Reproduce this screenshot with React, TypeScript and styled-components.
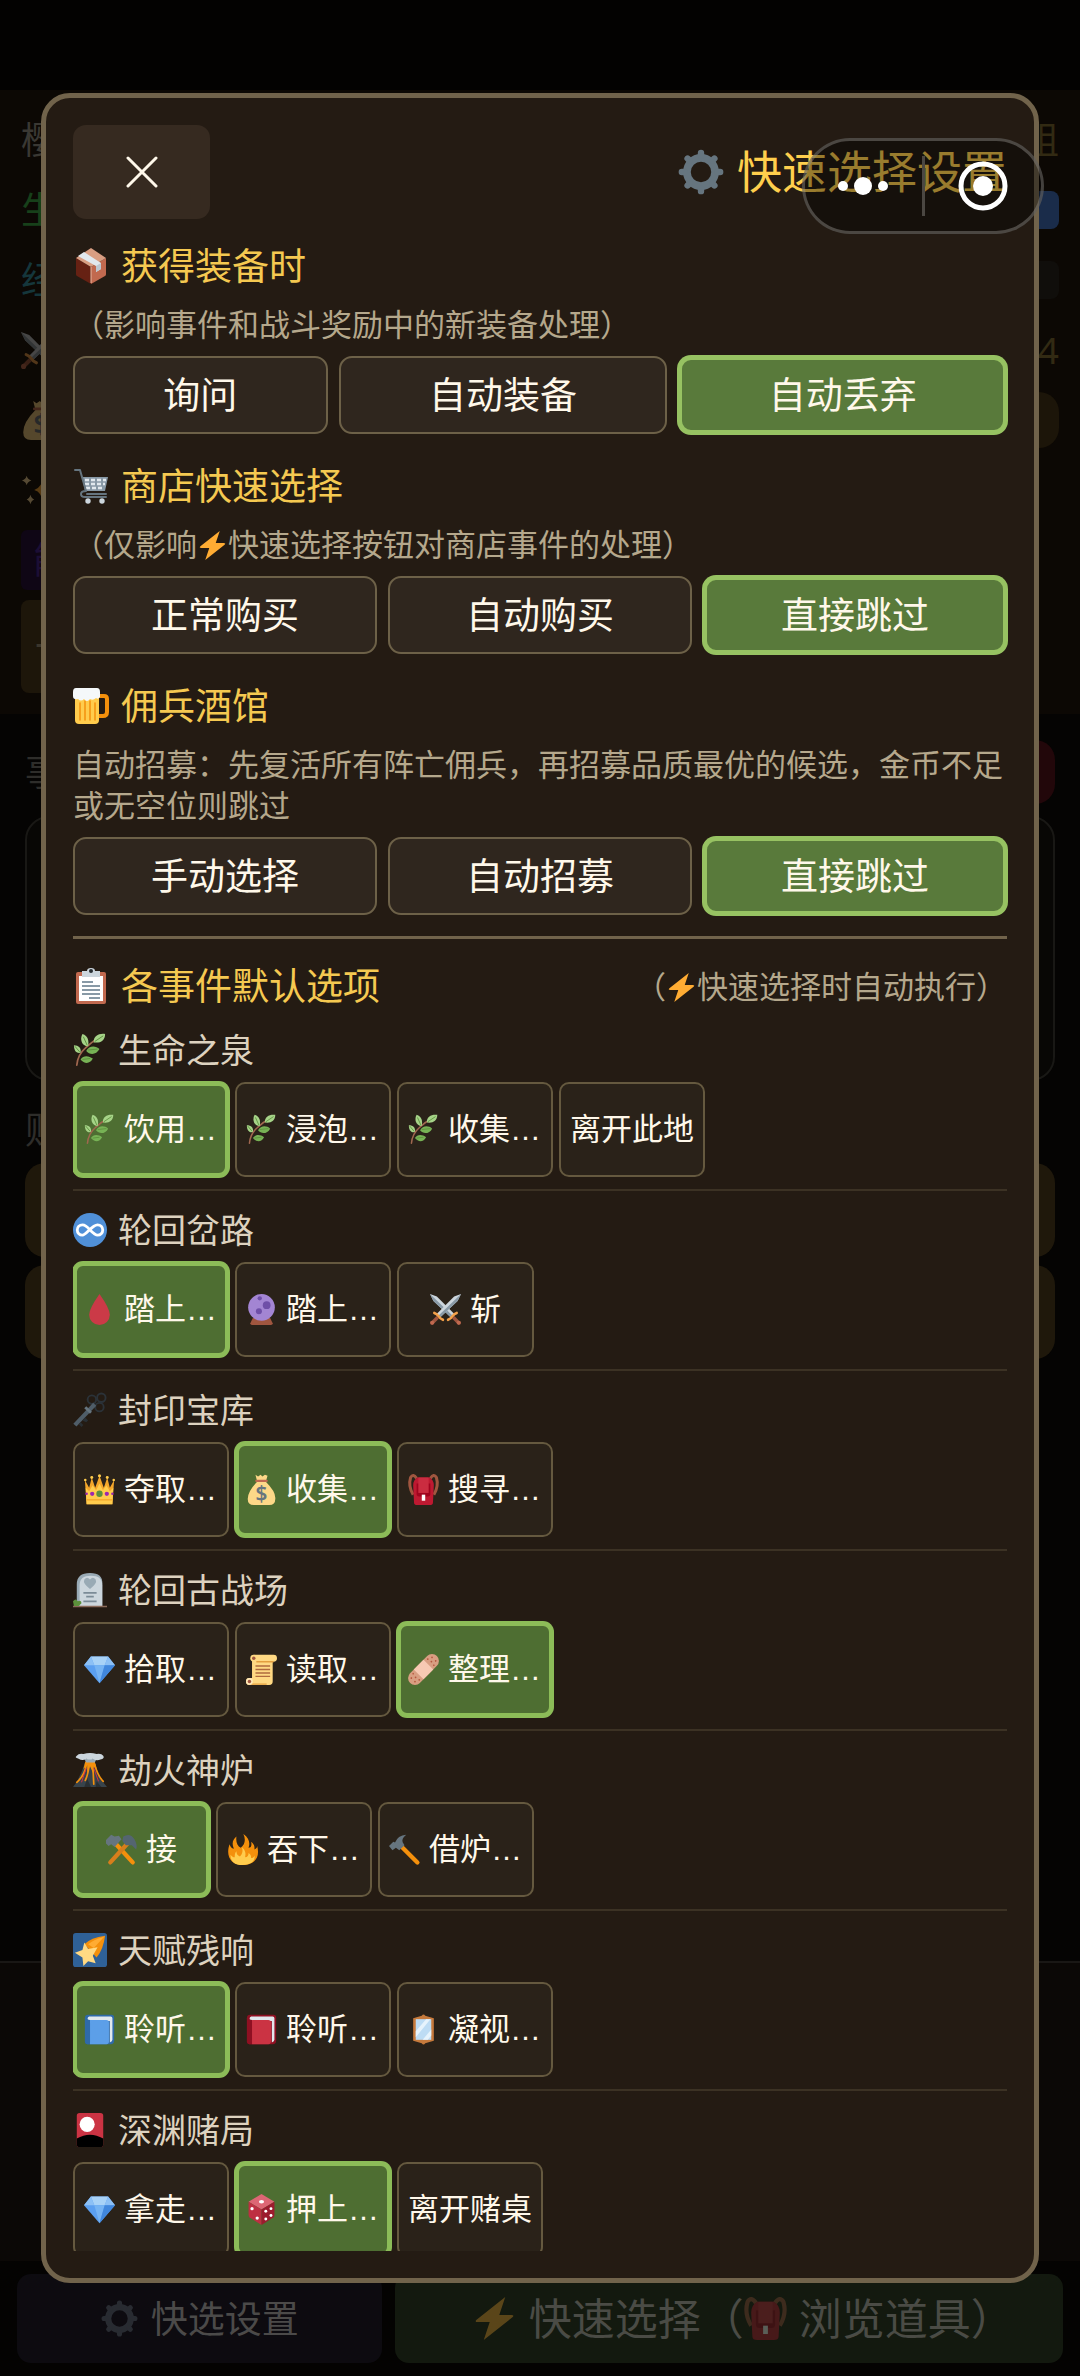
import React, { useState } from "react";
import styled, { createGlobalStyle, css } from "styled-components";

const GlobalStyle = createGlobalStyle`
  * { box-sizing: border-box; }
  body {
    margin: 0;
    background: #040302;
    font-family: "Noto Sans", "Noto Sans CJK SC", sans-serif;
    color: #fff8ea;
  }
  button { font: inherit; color: inherit; border: 0; padding: 0; margin: 0; cursor: pointer; }
  h1, h2, h3, p { margin: 0; font-weight: 400; }
`;

/* ---------- icons ---------- */

type IconName =
  | "package" | "gear" | "cart" | "beer" | "clipboard" | "herb" | "infinity" | "drop"
  | "crystal" | "swords" | "key" | "crown" | "money" | "backpack" | "headstone" | "gem"
  | "scroll" | "bandage" | "volcano" | "hammerPick" | "fire" | "hammer" | "star"
  | "blueBook" | "redBook" | "mirror" | "cards" | "dice" | "bolt" | "sparkles";

const Book = ({ cover, spine }: { cover: string; spine: string }) => (
  <>
    <path fill={spine} d="M5 1h27a3 3 0 0 1 3 3v27a4 4 0 0 1-4 4H4a3 3 0 0 1-3-3V5a4 4 0 0 1 4-4z" />
    <path fill="#e1e8ed" d="M6 3h25a2 2 0 0 1 2 2v25q0 2-3 3V8H5Q3 4 6 3z" />
    <path fill={cover} d="M7 7h19a3 3 0 0 1 3 3v22a3 3 0 0 1-3 3H7z" />
    <path fill={spine} d="M3 6l4 1v28H4a2 2 0 0 1-2-2z" />
  </>
);

const art: Record<IconName, React.ReactNode> = {
  package: (
    <>
      <path fill="#662113" d="M3 10l15 9v17L4 28a2 2 0 0 1-1-2z" />
      <path fill="#c1694f" d="M33 10l-15 9v17l14-8a2 2 0 0 0 1-2z" />
      <path fill="#d99e82" d="M18 0l15 10-15 9L3 10z" />
      <path fill="#e1e8ed" d="M5 8l6-4 17 11v6l-5 3v-6z" />
      <path fill="#bdc8d1" d="M23 18l5-3v6l-5 3z" />
      <path stroke="#e8b79f" strokeWidth="1" d="M18 19v16" />
    </>
  ),
  gear: (
    <>
      <circle cx="18" cy="18" r="11" fill="none" stroke="#66757f" strokeWidth="6" />
      <g stroke="#66757f" strokeWidth="5" strokeLinecap="round">
        <path d="M18 5V3M18 31v2M5 18H3M31 18h2M9 9L7.500 7.500M27 27l1.500 1.500M27 9l1.500-1.500M9 27l-1.500 1.500" />
      </g>
    </>
  ),
  cart: (
    <>
      <path fill="#8899a6" d="M9 9h26l-3 14H12z" />
      <g stroke="#e1e8ed" strokeWidth="2.600" strokeDasharray="4 2">
        <path d="M12 12h21M12 16h20M13 20h18" />
      </g>
      <path fill="none" stroke="#66757f" strokeWidth="2" strokeLinecap="round" strokeLinejoin="round" d="M2 2h5l6 21q-5 0-5 3t4 3h21M14 26h19" />
      <circle cx="15" cy="33" r="2.700" fill="#ccd6dd" />
      <circle cx="29" cy="33" r="2.700" fill="#ccd6dd" />
    </>
  ),
  beer: (
    <>
      <path fill="none" stroke="#f4900c" strokeWidth="4" d="M26 8h5q3 0 3 3v13q0 4-4 4h-4" />
      <path fill="#ffcc4d" d="M2 8h24v24a4 4 0 0 1-4 4H6a4 4 0 0 1-4-4z" />
      <path stroke="#f4900c" strokeWidth="1.500" strokeLinecap="round" d="M7 15v17M12 13v19M17 13v19M22 15v17" />
      <path fill="#f5f8fa" d="M3 0h21q3 0 3 4v5q-2 3-4 1-3 3-6 1-3 4-6 0-3 3-6 0-5 1-5-3V4q0-4 3-4z" />
    </>
  ),
  clipboard: (
    <>
      <rect x="3" y="4" width="30" height="32" rx="2" fill="#c1694f" />
      <path fill="#fff" d="M6 8h24v25H6z" />
      <path fill="#ccd6dd" d="M9 3h5q0-3 4-3t4 3h5v6H9z" />
      <circle cx="18" cy="3" r="2" fill="#292f33" />
      <path stroke="#8899a6" strokeWidth="2" d="M9 14h11M9 18h18M9 22h18M9 26h18M16 30h11" />
    </>
  ),
  herb: (
    <>
      <path fill="none" stroke="#a0674f" strokeWidth="1.800" strokeLinecap="round" d="M4 34Q5 23 13 16Q20 9 30 4" />
      <path fill="#a6d388" d="M16 14C9 14 7 6 10 1C16 3 17 8 16 14z" />
      <path fill="#a6d388" d="M22 10C21 3 28 0 34 1C34 8 29 11 22 10z" />
      <path fill="#a6d388" d="M8 21C3 22 1 18 1 13C6 13 9 16 8 21z" />
      <path fill="#77b255" d="M14 19C17 13 24 13 28 17C25 23 18 24 14 19z" />
      <path fill="#77b255" d="M8 28C11 23 17 24 21 27C18 33 12 33 8 28z" />
      <path stroke="#5c913b" strokeWidth="1" d="M11 4l4 9M32 3l-9 6M2 14l5 6M16 18l10-1M10 28l8-1" />
    </>
  ),
  infinity: (
    <>
      <circle cx="18" cy="18" r="18" fill="#5090d8" />
      <path fill="none" stroke="#fff" strokeWidth="3" d="M18 18C14 13 12 12.500 10 12.500a5.500 5.500 0 0 0 0 11C14 23.500 20 12.500 26 12.500a5.500 5.500 0 0 1 0 11C24 23.500 22 22 18 18z" />
    </>
  ),
  drop: <path fill="#cb3a47" d="M18 0Q30 17 30 24a12 12 0 0 1-24 0Q6 17 18 0z" />,
  crystal: (
    <>
      <path fill="#a0563f" d="M8 28h20l3 6q0 2-2 2H7q-2 0-2-2z" />
      <circle cx="18" cy="15.500" r="15.500" fill="#a385d3" />
      <circle cx="24" cy="13" r="4.500" fill="#6f4fa8" />
      <circle cx="15" cy="20" r="3.500" fill="#6f4fa8" />
      <circle cx="16" cy="5" r="2.500" fill="#6f4fa8" />
    </>
  ),
  swords: (
    <>
      {[false, true].map((flip) => (
        <g key={String(flip)} transform={flip ? "translate(36 0) scale(-1 1)" : undefined}>
          <path fill="#ccd6dd" d="M0 0l8 3 20 20-4 4L4 8z" />
          <path fill="#8899a6" d="M0 0l4 8 20 19 2-2z" />
          <path stroke="#f4a14a" strokeWidth="3" strokeLinecap="round" d="M21 30q3-1 5-4t5-4" />
          <path stroke="#a0563f" strokeWidth="4" d="M27 27l6 6" />
          <circle cx="33.500" cy="33.500" r="2.500" fill="#c1694f" />
        </g>
      ))}
    </>
  ),
  key: (
    <>
      <g fill="none" stroke="#2b3238" strokeWidth="2">
        <circle cx="20" cy="7" r="4.500" />
        <circle cx="30" cy="5" r="4.500" />
        <circle cx="28" cy="15" r="4.500" />
      </g>
      <path stroke="#4f5d68" strokeWidth="4.500" d="M2 34l21-22" />
      <path stroke="#66757f" strokeWidth="3" d="M13 15l6 6" />
      <path fill="#292f33" d="M10 29l3-3 3 3-2 2zM6 33l2-2 3 3-2 2z" />
    </>
  ),
  crown: (
    <>
      <path fill="#f4a62a" d="M3 35L1 7l5 9 3-12 4 12 5-14 5 14 4-12 3 12 5-9-2 28z" />
      <path fill="#ffcc4d" d="M2 16l4 4 4-7 4 6 4-8 4 8 4-6 4 7 4-4-1 19H3z" />
      <g fill="#ffcc4d">
        <circle cx="1.500" cy="7" r="1.500" /><circle cx="9" cy="4" r="1.700" /><circle cx="18" cy="2" r="1.800" />
        <circle cx="27" cy="4" r="1.700" /><circle cx="34.500" cy="7" r="1.500" />
      </g>
      <path stroke="#f4a62a" strokeWidth="1.500" d="M3 30h30" />
      <circle cx="18" cy="23" r="3.700" fill="#5c913b" />
      <circle cx="9.500" cy="23" r="2.500" fill="#9c27b0" />
      <circle cx="26.500" cy="23" r="2.500" fill="#9c27b0" />
      <circle cx="3" cy="23" r="1.500" fill="#9c27b0" /><circle cx="33" cy="23" r="1.500" fill="#9c27b0" />
    </>
  ),
  money: (
    <>
      <path fill="#fdd888" d="M11 1l3 2 3-2 2 2 3-2 3 1-2 7q12 12 11 20 0 7-7 7H9q-7 0-7-7Q2 20 13 9z" />
      <path stroke="#bf6952" strokeWidth="2.500" strokeLinecap="round" d="M12 8h12" />
      <text x="18" y="31" textAnchor="middle" fontSize="24" fontWeight="600" fill="#67757f" fontFamily="Noto Sans, sans-serif">$</text>
    </>
  ),
  backpack: (
    <>
      <path fill="none" stroke="#a0563f" strokeWidth="3.500" d="M10 5Q6-1 3 4Q0 14 6 24M26 5q4-6 7-1q3 10-3 20" />
      <path fill="#be1931" d="M11 4h14q5 3 5 9l-1 20q0 3-4 3H11q-4 0-4-3L6 13q0-6 5-9z" />
      <path fill="#a0041e" d="M10 11h16v12q0 3-3 3H13q-3 0-3-3z" />
      <path fill="#cb2c40" d="M12 4h12v18H12z" />
      <rect x="16" y="24" width="4" height="7" fill="#fff" />
    </>
  ),
  headstone: (
    <>
      <path fill="#99aab5" d="M4 12Q4 0 18 0t13 12v24H4z" />
      <path fill="#ccd6dd" d="M7 13Q7 3 19 3t12 10v23H7z" />
      <path fill="#99aab5" d="M18 17q-8-6-6-10 3-4 6 0 3-4 6 0 2 4-6 10z" />
      <path stroke="#7b8b97" strokeWidth="2" d="M11 21h14M14 25h8M11 30h14" />
      <path stroke="#8a6a5a" strokeWidth="1.500" d="M0 35.500h36" />
      <path fill="#5c913b" d="M0 30q3-4 5 0 4-2 4 2l-3 3H1z" />
    </>
  ),
  gem: (
    <>
      <path fill="#5b9ff0" d="M8 3h20l8 10-18 21L0 13z" />
      <path fill="#a8d2f7" d="M8 3h20l-4 10H12z" />
      <path fill="#8cc0f5" d="M0 13L8 3l4 10zM36 13L28 3l-4 10z" />
      <path fill="#75b3f3" d="M12 13h12l-6 21z" />
      <path fill="#4187dd" d="M36 13H24l-6 21z" />
    </>
  ),
  scroll: (
    <>
      <path fill="#ffd983" d="M9 1h23q4 0 4 4t-4 4h-1v23q0 4-4 4H4q-4 0-4-4t4-4h3V4z" />
      <path stroke="#e39f3f" strokeWidth="1.500" d="M12 9h20M2 35h22" />
      <circle cx="9" cy="5" r="4" fill="#ffd983" /><circle cx="9" cy="5" r="2" fill="#a0563f" />
      <circle cx="4" cy="32" r="4" fill="#ffe8b6" /><circle cx="4" cy="32" r="2" fill="#a0563f" />
      <path stroke="#b06b3f" strokeWidth="1.600" d="M11 14h17M11 18h17M11 22h17M11 26h17" />
    </>
  ),
  bandage: (
    <g transform="rotate(-45 18 18)">
      <rect x="-4" y="10" width="44" height="16" rx="8" fill="#d99e82" />
      <rect x="10" y="10" width="16" height="16" fill="#f7c9b3" />
      <g fill="#b5573f">
        <circle cx="1" cy="15" r="1" /><circle cx="5" cy="18" r="1" /><circle cx="1" cy="21" r="1" /><circle cx="6" cy="13" r="1" /><circle cx="6" cy="23" r="1" />
        <circle cx="35" cy="15" r="1" /><circle cx="31" cy="18" r="1" /><circle cx="35" cy="21" r="1" /><circle cx="30" cy="13" r="1" /><circle cx="30" cy="23" r="1" />
      </g>
    </g>
  ),
  volcano: (
    <>
      <path fill="#38434b" d="M0 36Q8 26 13 9h10q4 17 13 27z" />
      <path fill="#292f33" d="M12 36l3-9 4 9zM24 36l1-6 5 6z" />
      <path fill="#f4900c" d="M13 9h10l2 8-4-3 1 9-4-9-3 8v-9l-4 4z" />
      <path fill="none" stroke="#f4900c" strokeWidth="1.800" strokeLinecap="round" d="M14 13Q12 24 4 31M17 13q-1 10-4 16M21 13l1 20M23 12q3 12 9 18" />
      <path fill="none" stroke="#dd2e44" strokeWidth="1" d="M14 16l-5 15M22 16l5 14" />
      <path fill="#99aab5" d="M12 6h13l-2 4h-9z" />
      <path fill="#ccd6dd" d="M4 3Q6 0 11 1q7-2 14 0 5-1 7 2 2 3-3 4-4 2-8-1-3 2-7 0-4 3-8 0-5-1-2-3z" />
    </>
  ),
  hammerPick: (
    <>
      <path stroke="#f4900c" strokeWidth="5" strokeLinecap="round" d="M11 11l20 22" />
      <path stroke="#d67e1c" strokeWidth="5" strokeLinecap="round" d="M25 11L5 33" />
      <path fill="#66757f" d="M0 7l6-6 4 2 5-1 3 4-8 9-4-3-3 2-3-3z" />
      <path fill="#546570" d="M20 3q8-5 13 3 4 7 2 12l-5-5-7 0-4-5z" />
    </>
  ),
  fire: (
    <>
      <path fill="#f4900c" d="M19 0C26 5 27 11 25 16C28 16 29 13 28 9C32 12 32 15 32 18C34 17 35 16 35 14C39 28 31 36 18 36C5 36-2 26 3 12C4 15 5 17 8 17C5 11 7 6 11 3C10 9 12 14 16 16C21 12 22 6 19 0z" />
      <path fill="#ffcc4d" d="M17 15C22 19 22 23 21 27C24 27 25 25 25 22C28 24 28 26 28 28C30 28 31 27 32 25C33 32 27 36 18 36C9 36 4 32 4 24C6 26 7 27 9 27C9 24 9 22 11 20C11 23 12 25 15 26C18 23 19 19 17 15z" />
    </>
  ),
  hammer: (
    <>
      <path stroke="#f4900c" strokeWidth="5" strokeLinecap="round" d="M15 15l18 18" />
      <path fill="#66757f" d="M0 14l5-5 2 1Q10 2 20 1q-6 5-4 9l2 3-6 6-4-3-4 3z" />
    </>
  ),
  star: (
    <>
      <rect width="36" height="36" rx="3" fill="#2f6197" />
      <path fill="#f4900c" d="M34 3Q19 5 12 12l13 14Q32 18 34 3z" />
      <path fill="#ffac33" d="M33 4Q22 7 16 12l6 4z" />
      <path fill="#ffd983" d="M12 10l4 7 10-2-5 9 3 8-8-2-5 5-1-9-8-5 8-3z" />
    </>
  ),
  blueBook: <Book cover="#5c9fe8" spine="#2f6aa8" />,
  redBook: <Book cover="#cb3343" spine="#8f1022" />,
  mirror: (
    <>
      <path fill="#c67a3c" d="M16 2q2-3 4 0l10 3v26l-10 3q-2 3-4 0L6 31V5z" />
      <path fill="#bddcf4" d="M9 6h18v24H9z" />
      <path fill="#e6f3fc" d="M9 20L21 6h5L9 27zM17 30l10-12v7l-4 5z" />
    </>
  ),
  cards: (
    <>
      <rect x="4" width="28" height="36" rx="3" fill="#cb3343" />
      <circle cx="15" cy="12" r="8" fill="#fff" />
      <path fill="#000" d="M4 27q14-8 28 0v6q0 3-3 3H7q-3 0-3-3z" />
    </>
  ),
  dice: (
    <>
      <path fill="#dd6674" d="M18 0l15 9-15 9L3 9z" />
      <path fill="#be2f42" d="M3 9l15 9v18L4 27q-1-1-1-3z" />
      <path fill="#9c1b2e" d="M33 9l-15 9v18l14-9q1-1 1-3z" />
      <g fill="#fff">
        <ellipse cx="18" cy="9" rx="3" ry="2" /><circle cx="7" cy="17" r="1.900" /><circle cx="13" cy="28" r="1.900" />
        <circle cx="23" cy="20" r="1.700" /><circle cx="29" cy="17" r="1.700" /><circle cx="23" cy="29" r="1.700" /><circle cx="29" cy="25" r="1.700" />
      </g>
    </>
  ),
  bolt: <path fill="#ffac33" d="M27 0L3 19q-2 2 1 2h10L9 36l24-19q2-2-1-2H22z" />,
  sparkles: (
    <>
      <path fill="#ffac33" d="M24 3q2 13 10 15-8 2-10 15-2-13-10-15Q22 16 24 3z" />
      <path fill="#ffe0a0" d="M6 3q1 4 5 5-4 1-5 5-1-4-5-5 4-1 5-5zM10 23q1 4 4 5-3 1-4 5-1-4-4-5 3-1 4-5z" />
    </>
  ),
};

const IconSvg = styled.svg<{ $size: number; $dim?: boolean }>`
  flex: none;
  display: block;
  width: ${(p) => p.$size}px;
  height: ${(p) => p.$size}px;
  opacity: ${(p) => (p.$dim ? 0.3 : 1)};
  overflow: visible;
`;

const InlineIconSvg = styled(IconSvg)`
  display: inline-block;
  vertical-align: -4px;
  margin: 0 1px;
`;

const Icon = ({ name, size, dim }: { name: IconName; size: number; dim?: boolean }) => (
  <IconSvg viewBox="0 0 36 36" $size={size} $dim={dim} fill="none" aria-hidden="true">{art[name]}</IconSvg>
);

const InlineBolt = () => (
  <InlineIconSvg viewBox="0 0 36 36" $size={29} fill="none" aria-hidden="true">{art.bolt}</InlineIconSvg>
);

/* ---------- dimmed game page ---------- */

const Page = styled.div`
  min-height: 100vh;
  display: flex;
  flex-direction: column;
  font-size: 37px;
  line-height: 50px;
`;

const StatusStrip = styled.div`
  height: 90px;
  background: #030201;
`;

const HeroPanel = styled.section`
  background: #0c0804;
  padding: 15px 21px 21px;
`;

const StatRow = styled.div<{ $color: string }>`
  height: 70px;
  display: flex;
  align-items: center;
  justify-content: space-between;
  color: ${(p) => p.$color};
`;

const StatValue = styled.span`
  color: #322a13;
`;

const Meter = styled.span<{ $color: string }>`
  width: 500px;
  height: 38px;
  border-radius: 8px;
  background: ${(p) => p.$color};
`;

const DimButton = styled.button`
  width: 160px;
  height: 56px;
  border-radius: 20px;
  background: #1c1509;
`;

const Skill = styled.div`
  width: 400px;
  height: 60px;
  margin-top: 5px;
  padding: 5px 12px;
  border-radius: 6px;
  background: #0f0615;
  color: #1c0e35;
`;

const Slot = styled.div`
  width: 400px;
  height: 93px;
  margin-top: 10px;
  padding: 21px 14px;
  border-radius: 8px;
  background: #1d160a;
  color: #3b362c;
`;

const EventPanel = styled.section`
  flex: 1;
  background: #050403;
  padding: 26px 25px 0;
  color: #2e2d2a;
`;

const EventHead = styled.div`
  display: flex;
  align-items: center;
  justify-content: space-between;
  margin-bottom: 12px;
`;

const DangerButton = styled.button`
  width: 180px;
  height: 64px;
  border-radius: 20px;
  background: #22070a;
`;

const EventCard = styled.div`
  height: 265px;
  border: 2px solid #191815;
  border-radius: 24px;
  background: #080705;
  margin-bottom: 24px;
`;

const ChoiceButton = styled.button`
  display: block;
  width: 100%;
  height: 94px;
  margin-top: 8px;
  border-radius: 20px;
  background: #1f180b;
`;

const LogPanel = styled.section`
  height: 300px;
  border-top: 2px solid #191715;
  background: #0b0806;
`;

const BottomBar = styled.nav`
  display: flex;
  gap: 13px;
  padding: 13px 17px;
  background: #040302;
`;

const BottomButton = styled.button<{ $main?: boolean }>`
  flex: ${(p) => (p.$main ? "7 1 0" : "4 1 0")};
  height: 89px;
  display: flex;
  align-items: center;
  justify-content: center;
  border-radius: 14px;
  white-space: nowrap;
  ${(p) =>
    p.$main
      ? css`gap: 13px; padding-left: 28px; background: #13190f; color: #4a4b45; font-size: 43px;`
      : css`gap: 13px; background: #0d0b10; color: #4b4a49; font-size: 37px;`}
`;

const BottomLabel = styled.span`
  display: flex;
  align-items: center;
`;

const Tail = styled.span`
  margin-left: 12px;
`;

/* ---------- dialog ---------- */

const Overlay = styled.div`
  position: fixed;
  inset: 0;
  display: flex;
  padding: 93px 41px;
`;

const Dialog = styled.div`
  flex: 1;
  min-width: 0;
  display: flex;
  flex-direction: column;
  padding: 27px;
  border: 5px solid #71634b;
  border-radius: 29px;
  background: #241b13;
`;

const DialogHead = styled.header`
  display: flex;
  align-items: center;
  justify-content: space-between;
  margin-bottom: 22px;
`;

const CloseButton = styled.button`
  width: 137px;
  height: 94px;
  display: grid;
  place-items: center;
  border-radius: 13px;
  background: #362a20;
`;

const DialogTitle = styled.h1`
  display: flex;
  align-items: center;
  gap: 13px;
  font-size: 45px;
  line-height: 50px;
  color: #ffcf4d;
`;

const Section = styled.section`
  margin-bottom: 27px;
  &:last-of-type { margin-bottom: 21px; }
`;

const SectionTitle = styled.h2`
  display: flex;
  align-items: center;
  gap: 12px;
  font-size: 37px;
  line-height: 50px;
  color: #f5c951;
`;

const Hint = styled.p`
  font-size: 31px;
  line-height: 41px;
  color: #b5a88c;
`;

const SectionHint = styled(Hint)`
  margin: 13px 0 11px;
`;

const OptionRow = styled.div`
  display: flex;
  gap: 11px;
`;

const picked = (fill: string, edge: string) => css`
  border: 4px solid ${edge};
  box-shadow: 0 0 0 1px ${edge};
  background: ${fill};
`;

const Option = styled.button<{ $on: boolean }>`
  flex: 1 1 auto;
  height: 78px;
  padding: 0 ${(p) => (p.$on ? 0 : 2)}px;
  border: 2px solid #6d6148;
  border-radius: 13px;
  background: #2f261e;
  font-size: 37px;
  line-height: 50px;
  ${(p) => p.$on && picked("#597a3b", "#97c262")}
`;

const EventsHead = styled.div`
  display: flex;
  align-items: center;
  justify-content: space-between;
  padding-top: 22px;
  border-top: 3px solid #71634b;
`;

const EventList = styled.div`
  flex: 1 1 0;
  min-height: 0;
  overflow: hidden auto;
  scrollbar-width: none;
`;

const EventItem = styled.section`
  padding: 14px 0 12px;
  border-bottom: 2px solid #3c3224;
`;

const EventTitle = styled.h3`
  display: flex;
  align-items: center;
  gap: 11px;
  margin-bottom: 7px;
  font-size: 34px;
  line-height: 50px;
  color: #ddd2bf;
`;

const ChoiceRow = styled.div`
  display: flex;
  gap: 6px;
`;

const Choice = styled.button<{ $on: boolean; $long: boolean }>`
  flex: none;
  display: flex;
  align-items: center;
  justify-content: ${(p) => (p.$long ? "flex-start" : "center")};
  gap: 9px;
  min-width: ${(p) => (p.$long ? 156 : 137)}px;
  height: 95px;
  padding: 0 ${(p) => (p.$on ? 7 : 9)}px;
  border: 2px solid #65593f;
  border-radius: 10px;
  background: #2a2219;
  font-family: "Liberation Sans", "Noto Sans CJK SC", sans-serif;
  font-size: 31px;
  line-height: 41px;
  white-space: nowrap;
  ${(p) => p.$on && picked("#4e6e32", "#8cbc58")}
`;

const Capsule = styled.div`
  position: fixed;
  top: 138px;
  right: 36px;
  display: flex;
  align-items: center;
  width: 242px;
  height: 96px;
  border: 3px solid rgba(150, 148, 143, 0.42);
  border-radius: 48px;
  background: rgba(0, 0, 0, 0.4);
`;

const CapsuleButton = styled.button`
  flex: 1;
  height: 90px;
  display: grid;
  place-items: center;
  background: transparent;
`;

const CapsuleRule = styled.span`
  width: 3px;
  height: 60px;
  background: #4b4742;
`;

/* ---------- data ---------- */

type Setting = { icon: IconName; title: string; hint: React.ReactNode; options: string[]; value: number };

const settings: Setting[] = [
  { icon: "package", title: "获得装备时", hint: "（影响事件和战斗奖励中的新装备处理）", options: ["询问", "自动装备", "自动丢弃"], value: 2 },
  { icon: "cart", title: "商店快速选择", hint: <>（仅影响<InlineBolt />快速选择按钮对商店事件的处理）</>, options: ["正常购买", "自动购买", "直接跳过"], value: 2 },
  { icon: "beer", title: "佣兵酒馆", hint: "自动招募：先复活所有阵亡佣兵，再招募品质最优的候选，金币不足或无空位则跳过", options: ["手动选择", "自动招募", "直接跳过"], value: 2 },
];

type GameEvent = { icon: IconName; title: string; choices: [IconName | null, string][]; value: number };

const events: GameEvent[] = [
  { icon: "herb", title: "生命之泉", choices: [["herb", "饮用…"], ["herb", "浸泡…"], ["herb", "收集…"], [null, "离开此地"]], value: 0 },
  { icon: "infinity", title: "轮回岔路", choices: [["drop", "踏上…"], ["crystal", "踏上…"], ["swords", "斩"]], value: 0 },
  { icon: "key", title: "封印宝库", choices: [["crown", "夺取…"], ["money", "收集…"], ["backpack", "搜寻…"]], value: 1 },
  { icon: "headstone", title: "轮回古战场", choices: [["gem", "拾取…"], ["scroll", "读取…"], ["bandage", "整理…"]], value: 2 },
  { icon: "volcano", title: "劫火神炉", choices: [["hammerPick", "接"], ["fire", "吞下…"], ["hammer", "借炉…"]], value: 0 },
  { icon: "star", title: "天赋残响", choices: [["blueBook", "聆听…"], ["redBook", "聆听…"], ["mirror", "凝视…"]], value: 0 },
  { icon: "cards", title: "深渊赌局", choices: [["gem", "拿走…"], ["dice", "押上…"], [null, "离开赌桌"]], value: 1 },
];

/* ---------- parts ---------- */

const SettingGroup = ({ item }: { item: Setting }) => {
  const [value, setValue] = useState(item.value);
  return (
    <Section>
      <SectionTitle><Icon name={item.icon} size={36} />{item.title}</SectionTitle>
      <SectionHint>{item.hint}</SectionHint>
      <OptionRow>
        {item.options.map((label, i) => (
          <Option key={label} type="button" $on={i === value} aria-pressed={i === value} onClick={() => setValue(i)}>{label}</Option>
        ))}
      </OptionRow>
    </Section>
  );
};

const EventGroup = ({ item }: { item: GameEvent }) => {
  const [value, setValue] = useState(item.value);
  return (
    <EventItem>
      <EventTitle><Icon name={item.icon} size={34} />{item.title}</EventTitle>
      <ChoiceRow>
        {item.choices.map(([icon, label], i) => (
          <Choice key={i} type="button" $on={i === value} $long={label.endsWith("…")} aria-pressed={i === value} onClick={() => setValue(i)}>
            {icon && <Icon name={icon} size={31} />}
            {label}
          </Choice>
        ))}
      </ChoiceRow>
    </EventItem>
  );
};

export default function App() {
  return (
    <>
      <GlobalStyle />
      <Page>
        <StatusStrip />
        <HeroPanel>
          <StatRow $color="#3a3833"><span>樱</span><StatValue>组</StatValue></StatRow>
          <StatRow $color="#17401a"><span>生</span><Meter $color="#1a2c4a" /></StatRow>
          <StatRow $color="#15363b"><span>经</span><Meter $color="#100e0b" /></StatRow>
          <StatRow $color="#3a3833"><Icon name="swords" size={37} dim /><StatValue>4</StatValue></StatRow>
          <StatRow $color="#3a3833"><Icon name="money" size={40} dim /><DimButton type="button" aria-label="金币" /></StatRow>
          <StatRow $color="#3a3833"><Icon name="sparkles" size={34} dim /></StatRow>
          <Skill>能</Skill>
          <Slot>一</Slot>
        </HeroPanel>
        <EventPanel>
          <EventHead><span>事</span><DangerButton type="button" aria-label="事件" /></EventHead>
          <EventCard />
          <span>财</span>
          <ChoiceButton type="button" aria-label="选项一" />
          <ChoiceButton type="button" aria-label="选项二" />
        </EventPanel>
        <LogPanel />
        <BottomBar>
          <BottomButton type="button"><Icon name="gear" size={37} dim />快选设置</BottomButton>
          <BottomButton type="button" $main>
            <Icon name="bolt" size={43} dim />
            <BottomLabel>快速选择（<Icon name="backpack" size={43} dim /><Tail>浏览道具）</Tail></BottomLabel>
          </BottomButton>
        </BottomBar>
      </Page>

      <Overlay>
        <Dialog role="dialog" aria-modal="true" aria-labelledby="quick-title">
          <DialogHead>
            <CloseButton type="button" aria-label="关闭">
              <svg width="32" height="32" viewBox="0 0 32 32" fill="none" stroke="#fff8ea" strokeWidth="3" strokeLinecap="round" aria-hidden="true">
                <path d="M2 2l28 28M30 2L2 30" />
              </svg>
            </CloseButton>
            <DialogTitle id="quick-title"><Icon name="gear" size={46} />快速选择设置</DialogTitle>
          </DialogHead>
          {settings.map((item) => <SettingGroup key={item.title} item={item} />)}
          <EventsHead>
            <SectionTitle><Icon name="clipboard" size={36} />各事件默认选项</SectionTitle>
            <Hint>（<InlineBolt />快速选择时自动执行）</Hint>
          </EventsHead>
          <EventList>
            {events.map((item) => <EventGroup key={item.title} item={item} />)}
          </EventList>
        </Dialog>
      </Overlay>

      <Capsule>
        <CapsuleButton type="button" aria-label="更多">
          <svg width="52" height="20" viewBox="0 0 52 20" fill="#fff" aria-hidden="true">
            <circle cx="6" cy="10" r="5" /><circle cx="26" cy="10" r="9" /><circle cx="46" cy="10" r="5" />
          </svg>
        </CapsuleButton>
        <CapsuleRule />
        <CapsuleButton type="button" aria-label="退出">
          <svg width="50" height="50" viewBox="0 0 50 50" aria-hidden="true">
            <circle cx="25" cy="25" r="22" fill="none" stroke="#fff" strokeWidth="5" />
            <circle cx="25" cy="25" r="10" fill="#fff" />
          </svg>
        </CapsuleButton>
      </Capsule>
    </>
  );
}
